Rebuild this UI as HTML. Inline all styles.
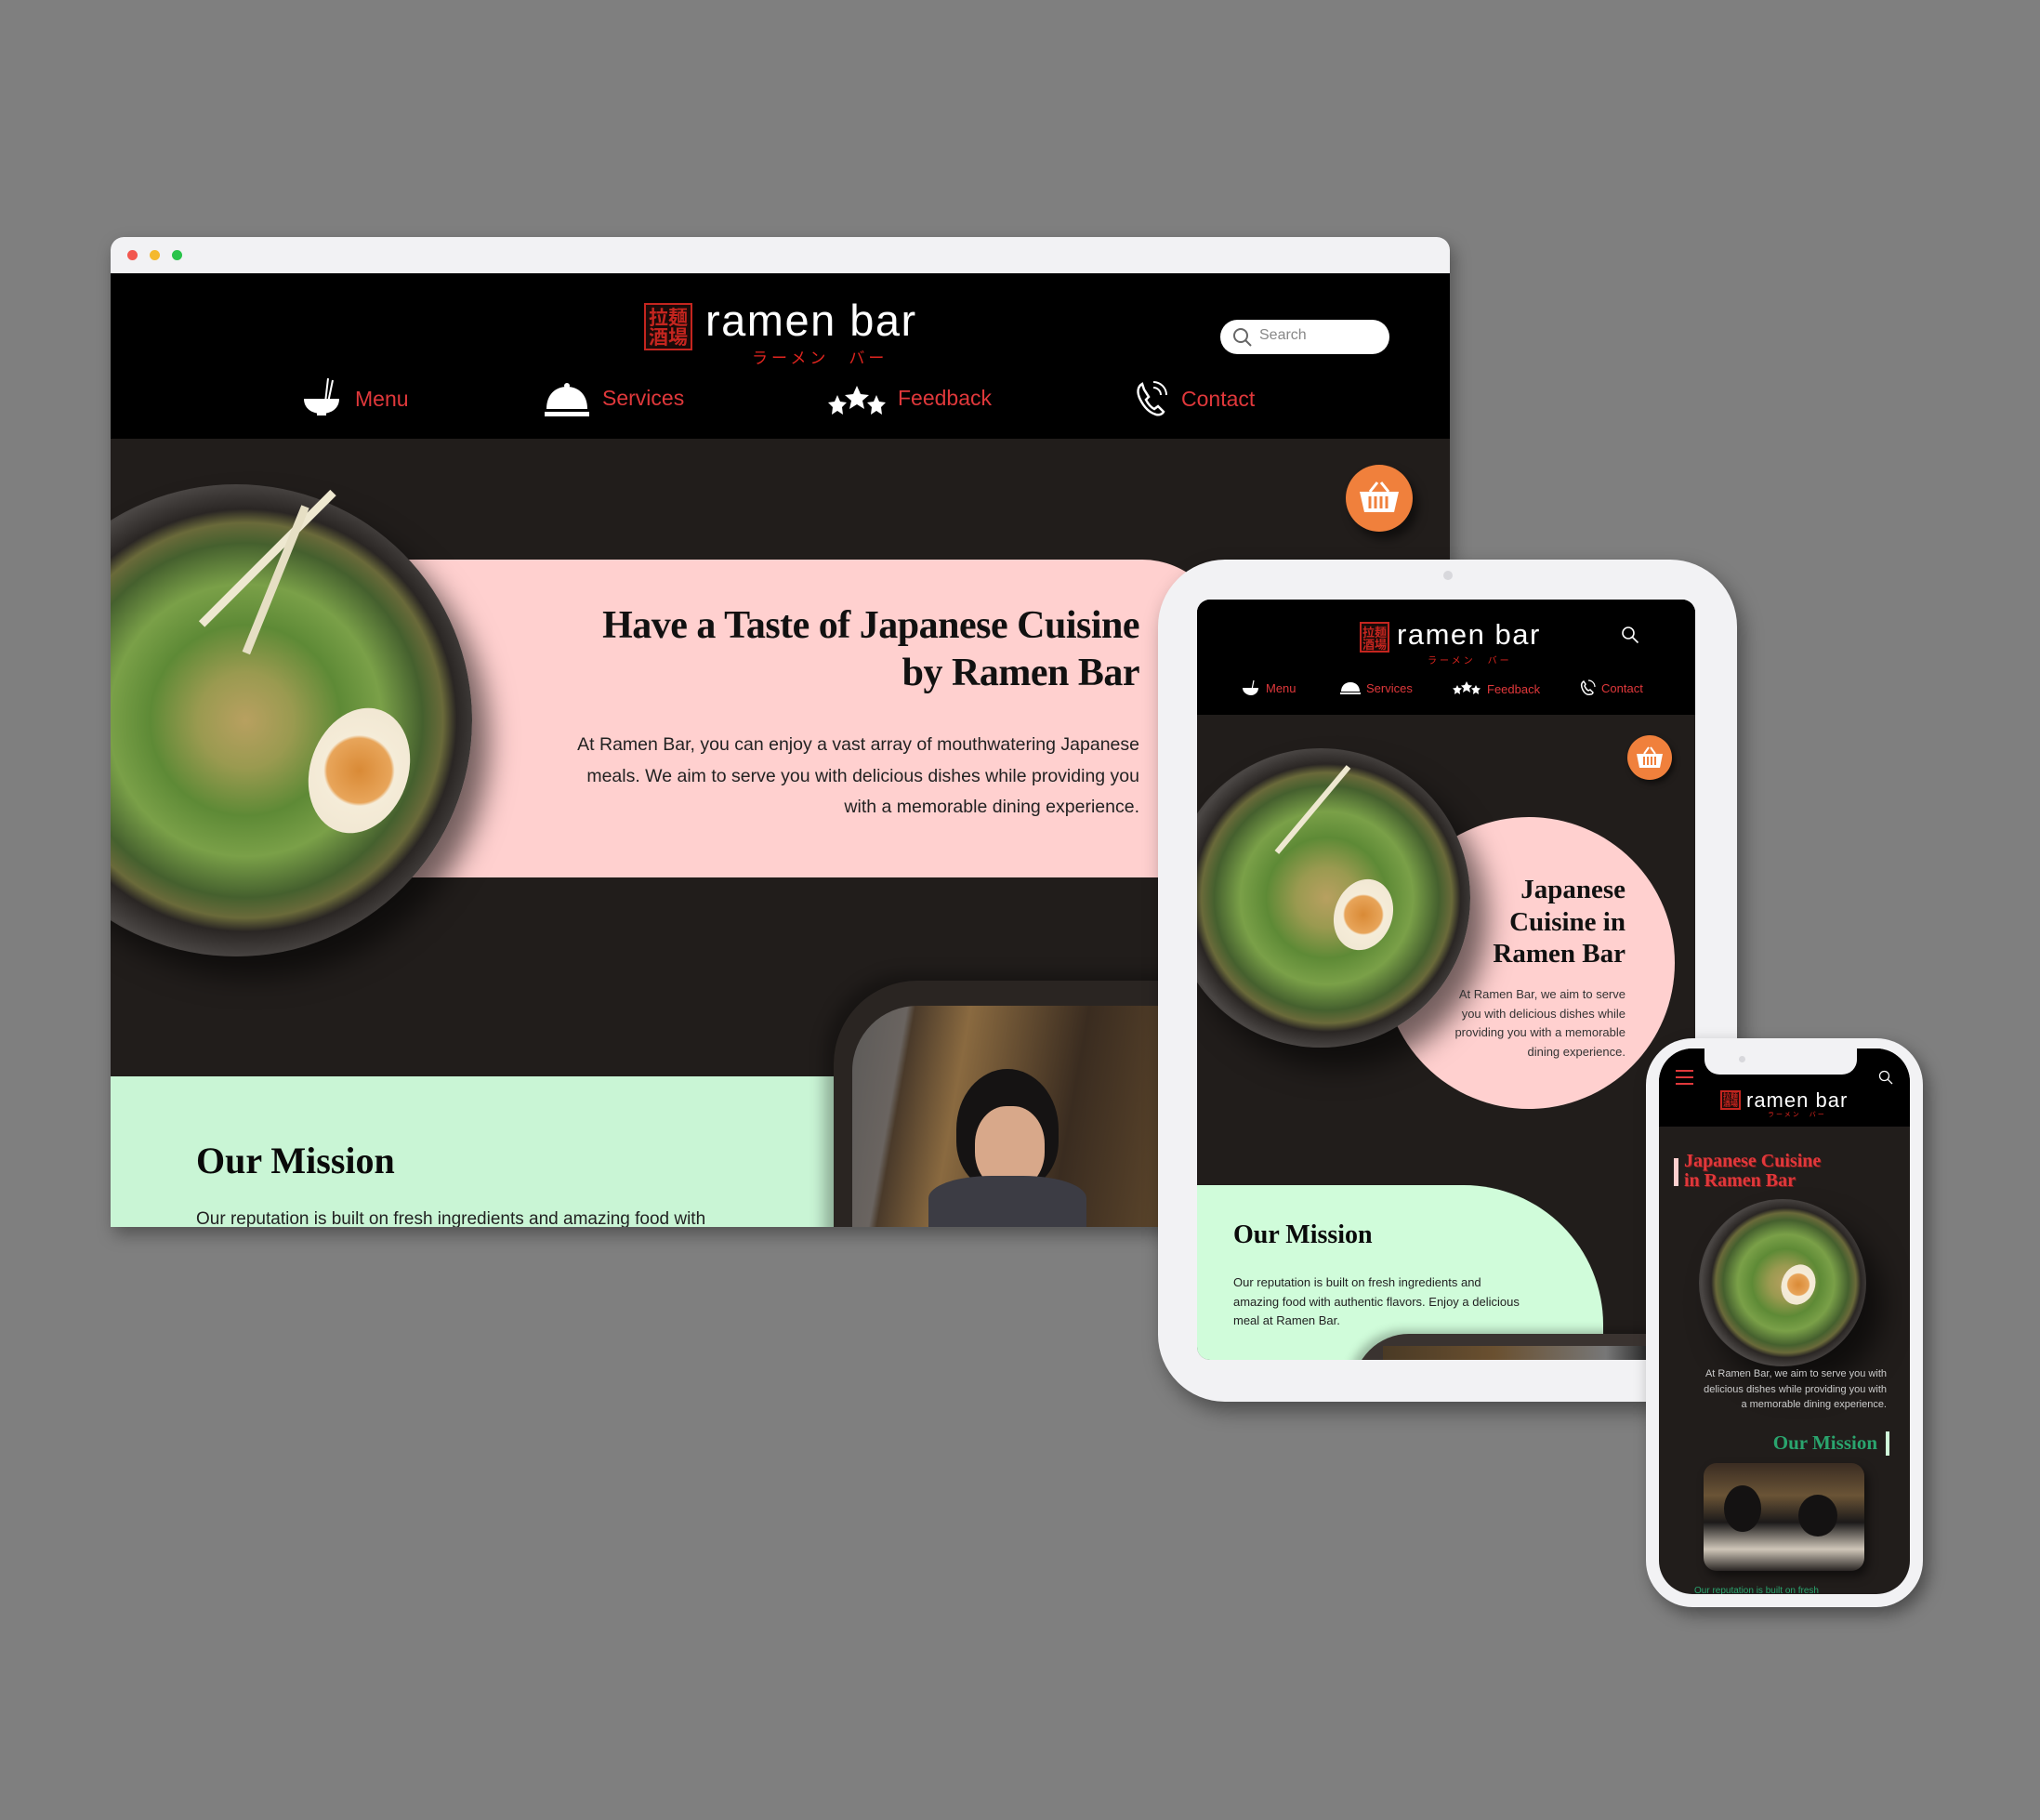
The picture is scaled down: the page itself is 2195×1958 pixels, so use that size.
<!DOCTYPE html>
<html><head><meta charset="utf-8"><style>
*{margin:0;padding:0;box-sizing:border-box}
body{width:2195px;height:1958px;background:#7f7f7f;position:relative;overflow:hidden;font-family:"Liberation Sans","Noto Sans CJK JP",sans-serif}
.a{position:absolute}
.serif{font-family:"Liberation Serif","Noto Serif CJK SC",serif;font-weight:bold}
.kan{background:#1a0a08;border:2px solid #c4251f;color:#c4251f;font-family:"Noto Sans CJK JP",sans-serif;font-weight:bold;display:flex;flex-wrap:wrap;align-content:center;justify-content:center;text-align:center;line-height:1}
.bowl{border-radius:50%;background:radial-gradient(circle at 52% 50%,#b8a060 0,#9a9a50 14%,#5e8a36 28%,#7aa048 40%,#45602e 52%,#6a6a3a 58%,#2a2624 62%,#4a4644 70%,#2c2a28 84%,#151312 100%);box-shadow:18px 22px 30px rgba(0,0,0,.55)}
.egg{border-radius:50%;background:radial-gradient(circle at 50% 50%,#d98a36 0,#e8a55a 40%,#f5ecd8 44%,#efe5d0 100%)}
.nav{color:#e0383b}
</style></head><body>

<!-- DESKTOP WINDOW -->
<div class="a" style="left:119px;top:255px;width:1441px;height:1065px;border-radius:14px 14px 0 0;overflow:hidden;background:#211d1b;box-shadow:4px 8px 18px rgba(0,0,0,.35)">
  <div class="a" style="left:0;top:0;width:1441px;height:39px;background:#f2f2f4"></div>
  <div class="a" style="left:18px;top:14px;width:11px;height:11px;border-radius:50%;background:#f2574f"></div>
  <div class="a" style="left:42px;top:14px;width:11px;height:11px;border-radius:50%;background:#f5b92e"></div>
  <div class="a" style="left:66px;top:14px;width:11px;height:11px;border-radius:50%;background:#29c34a"></div>
  <div class="a" style="left:0;top:39px;width:1441px;height:178px;background:#000"></div>
  <div class="a kan" style="left:574px;top:71px;width:52px;height:51px;font-size:21px">拉麺<br>酒場</div>
  <div class="a" style="left:640px;top:62px;color:#fff;font-size:47px;font-weight:300;letter-spacing:1.5px">ramen bar</div>
  <div class="a" style="left:690px;top:116px;color:#e0251f;font-size:17px;letter-spacing:4px;font-family:'Noto Sans CJK JP',sans-serif">ラーメン　バー</div>
  <div class="a" style="left:1194px;top:89px;width:182px;height:37px;border-radius:19px;background:#fff"></div>
  <svg class="a" style="left:1207px;top:97px" width="22" height="22"><circle cx="9" cy="9" r="7" fill="none" stroke="#666" stroke-width="2"/><path d="M14 14l6 6" stroke="#666" stroke-width="2"/></svg>
  <div class="a" style="left:1236px;top:97px;color:#888;font-size:16px">Search</div>
  <!-- nav -->
  <svg class="a" style="left:206px;top:150px" width="44" height="44"><path d="M28 2l-3 26M33 4l-5 24" stroke="#fff" stroke-width="2"/><path d="M2 24h38c0 10-8 16-19 16S2 34 2 24z" fill="#fff"/><rect x="16" y="38" width="10" height="4" fill="#fff"/></svg>
  <div class="a nav" style="left:263px;top:161px;font-size:23px">Menu</div>
  <svg class="a" style="left:466px;top:155px" width="50" height="40"><path d="M3 30C3 14 13 6 25 6S47 14 47 30z" fill="#fff"/><circle cx="25" cy="5" r="3" fill="#fff"/><rect x="1" y="33" width="48" height="5" fill="#fff"/></svg>
  <div class="a nav" style="left:529px;top:160px;font-size:23px">Services</div>
  <svg class="a" style="left:772px;top:158px" width="62" height="36"><g fill="#fff"><path d="M10 12l3 7 7 1-5 5 1 8-6-4-6 4 1-8-5-5 7-1z"/><path d="M31 2l4 9 9 1-7 6 2 9-8-5-8 5 2-9-7-6 9-1z"/><path d="M52 12l3 7 7 1-5 5 1 8-6-4-6 4 1-8-5-5 7-1z"/></g></svg>
  <div class="a nav" style="left:847px;top:160px;font-size:23px">Feedback</div>
  <svg class="a" style="left:1102px;top:152px" width="40" height="42"><path d="M8 6c-5 3-6 9-2 17s10 14 17 16c4 1 7-1 8-3l-6-6-4 3c-4-2-7-6-9-10l3-3-5-8z" fill="none" stroke="#fff" stroke-width="2.5"/><path d="M20 4a14 14 0 0 1 14 14M20 10a8 8 0 0 1 8 8" fill="none" stroke="#fff" stroke-width="2"/></svg>
  <div class="a nav" style="left:1152px;top:161px;font-size:23px">Contact</div>
  <!-- basket -->
  <div class="a" style="left:1329px;top:245px;width:72px;height:72px;border-radius:50%;background:#f0803c;box-shadow:6px 8px 10px rgba(0,0,0,.5)"></div>
  <svg class="a" style="left:1341px;top:260px" width="48" height="40"><path d="M14 14l8-10M34 14l-8-10" stroke="#fff" stroke-width="3"/><path d="M3 14h42l-5 22H8z" fill="#fff"/><g stroke="#f0803c" stroke-width="3"><path d="M14 19v13M20 19v13M26 19v13M32 19v13"/></g></svg>
  <!-- pink band -->
  <div class="a" style="left:300px;top:347px;width:900px;height:342px;background:#ffd0cf;border-radius:0 90px 0 0"></div>
  <div class="a bowl" style="left:-119px;top:266px;width:508px;height:508px"></div>
  <div class="a" style="left:235px;top:275px;width:9px;height:200px;background:#eee8d0;transform:rotate(45deg);transform-origin:top"></div>
  <div class="a" style="left:205px;top:290px;width:9px;height:170px;background:#e6dfc4;transform:rotate(22deg);transform-origin:top"></div>
  <div class="a egg" style="left:215px;top:505px;width:105px;height:138px;transform:rotate(20deg)"></div>
  <div class="a serif" style="right:334px;top:393px;font-size:42px;line-height:51px;text-align:right;color:#111;letter-spacing:-0.5px">Have a Taste of Japanese Cuisine<br>by Ramen Bar</div>
  <div class="a" style="right:334px;top:530px;font-size:19.5px;line-height:33.5px;text-align:right;color:#222">At Ramen Bar, you can enjoy a vast array of mouthwatering Japanese<br>meals. We aim to serve you with delicious dishes while providing you<br>with a memorable dining experience.</div>
  <!-- mint -->
  <div class="a" style="left:0;top:903px;width:830px;height:170px;background:#c9f5d5"></div>
  <div class="a" style="left:778px;top:800px;width:400px;height:300px;border-radius:90px 0 0 0;background:#2a2522;box-shadow:-10px -8px 16px rgba(0,0,0,.3)"></div>
  <div class="a" style="left:798px;top:827px;width:380px;height:260px;border-radius:70px 0 0 0;background:linear-gradient(100deg,#5c5a58 0,#6a6460 14%,#4a3a2a 16%,#8a6a40 30%,#3a2c20 60%,#6a5030 100%)"></div>
  <div class="a" style="left:910px;top:895px;width:110px;height:130px;border-radius:50% 50% 40% 40%;background:#151313"></div>
  <div class="a" style="left:930px;top:935px;width:75px;height:90px;border-radius:45%;background:#d8a88a"></div>
  <div class="a" style="left:880px;top:1010px;width:170px;height:60px;border-radius:40% 40% 0 0;background:#3c3c44"></div>
  <div class="a serif" style="left:92px;top:970px;font-size:40px;color:#0a0a0a">Our Mission</div>
  <div class="a" style="left:92px;top:1046px;font-size:19px;color:#222">Our reputation is built on fresh ingredients and amazing food with</div>
</div>

<!-- TABLET -->
<div class="a" style="left:1246px;top:602px;width:623px;height:906px;border-radius:72px;background:#f2f2f4;box-shadow:6px 10px 22px rgba(0,0,0,.4)"></div>
<div class="a" style="left:1553px;top:614px;width:10px;height:10px;border-radius:50%;background:#d8d8dc"></div>
<div class="a" style="left:1288px;top:645px;width:536px;height:818px;border-radius:14px;overflow:hidden;background:#211d1b">
  <div class="a" style="left:0;top:0;width:536px;height:124px;background:#000"></div>
  <div class="a kan" style="left:175px;top:24px;width:32px;height:33px;font-size:13px">拉麺<br>酒場</div>
  <div class="a" style="left:215px;top:20px;color:#fff;font-size:31px;font-weight:300;letter-spacing:1.5px">ramen bar</div>
  <div class="a" style="left:248px;top:57px;color:#e0251f;font-size:10px;letter-spacing:3px;font-family:'Noto Sans CJK JP',sans-serif">ラーメン　バー</div>
  <svg class="a" style="left:456px;top:28px" width="20" height="20"><circle cx="8" cy="8" r="6" fill="none" stroke="#fff" stroke-width="1.6"/><path d="M12.5 12.5l6 6" stroke="#fff" stroke-width="1.6"/></svg>
  <svg class="a" style="left:48px;top:86px" width="20" height="18"><path d="M13 1l-2 10" stroke="#fff" stroke-width="1.2"/><path d="M1 9h17c0 5-4 8-8 8S1 14 1 9z" fill="#fff"/></svg>
  <div class="a nav" style="left:74px;top:88px;font-size:13px">Menu</div>
  <svg class="a" style="left:154px;top:87px" width="22" height="16"><path d="M1 12C1 6 5 2 11 2s10 4 10 10z" fill="#fff"/><rect y="13" width="22" height="2" fill="#fff"/></svg>
  <div class="a nav" style="left:182px;top:88px;font-size:13px">Services</div>
  <svg class="a" style="left:275px;top:87px" width="30" height="16"><g fill="#fff"><path d="M5 5l1.5 3 3.5.5-2.5 2.5.5 4-3-2-3 2 .5-4L0 8.5 3.5 8z"/><path d="M15 1l2 4 4 .5-3 3 1 4.5-4-2.5-4 2.5 1-4.5-3-3 4-.5z"/><path d="M25 5l1.5 3 3.5.5-2.5 2.5.5 4-3-2-3 2 .5-4-2.5-2.5L23.5 8z"/></g></svg>
  <div class="a nav" style="left:312px;top:89px;font-size:13px">Feedback</div>
  <svg class="a" style="left:412px;top:85px" width="18" height="18"><path d="M4 3c-3 2-3 5-1 9s5 6 8 5c2 0 3-1 3-2l-3-3-2 1c-2-1-3-3-4-5l1-2-2-3z" fill="none" stroke="#fff" stroke-width="1.5"/><path d="M9 2a7 7 0 0 1 7 7" fill="none" stroke="#fff" stroke-width="1.2"/></svg>
  <div class="a nav" style="left:435px;top:88px;font-size:13px">Contact</div>
  <div class="a" style="left:463px;top:146px;width:48px;height:48px;border-radius:50%;background:#f0803c;box-shadow:3px 4px 6px rgba(0,0,0,.5)"></div>
  <svg class="a" style="left:471px;top:156px" width="32" height="28"><path d="M10 10l5-7M22 10l-5-7" stroke="#fff" stroke-width="2"/><path d="M2 10h28l-3 15H5z" fill="#fff"/><g stroke="#f0803c" stroke-width="2"><path d="M10 13v9M14 13v9M18 13v9M22 13v9"/></g></svg>
  <div class="a" style="left:200px;top:234px;width:314px;height:314px;border-radius:50%;background:#ffd0cf"></div>
  <div class="a bowl" style="left:-28px;top:160px;width:322px;height:322px"></div>
  <div class="a" style="left:160px;top:180px;width:6px;height:120px;background:#eee8d0;transform:rotate(40deg);transform-origin:top"></div>
  <div class="a egg" style="left:148px;top:300px;width:62px;height:78px;transform:rotate(20deg)"></div>
  <div class="a serif" style="right:75px;top:295px;font-size:29px;line-height:34.5px;text-align:right;color:#111">Japanese<br>Cuisine in<br>Ramen Bar</div>
  <div class="a" style="right:75px;top:415px;font-size:13px;line-height:20.5px;text-align:right;color:#333">At Ramen Bar, we aim to serve<br>you with delicious dishes while<br>providing you with a memorable<br>dining experience.</div>
  <div class="a" style="left:0;top:630px;width:437px;height:220px;background:#d0fcda;border-radius:0 150px 0 0"></div>
  <div class="a" style="left:168px;top:790px;width:330px;height:80px;border-radius:60px 0 0 0;background:#3a3330;box-shadow:-6px -4px 10px rgba(0,0,0,.25)"></div>
  <div class="a" style="left:200px;top:803px;width:300px;height:40px;background:linear-gradient(90deg,#4a3a25,#6a5030 40%,#777 80%,#111)"></div>
  <div class="a serif" style="left:39px;top:668px;font-size:28px;color:#0a0a0a">Our Mission</div>
  <div class="a" style="left:39px;top:725px;font-size:13px;line-height:20.5px;color:#222">Our reputation is built on fresh ingredients and<br>amazing food with authentic flavors. Enjoy a delicious<br>meal at Ramen Bar.</div>
</div>

<!-- PHONE -->
<div class="a" style="left:1771px;top:1117px;width:298px;height:612px;border-radius:50px;background:#f2f2f4;box-shadow:6px 8px 18px rgba(0,0,0,.4)"></div>
<div class="a" style="left:1785px;top:1128px;width:270px;height:587px;border-radius:36px;overflow:hidden;background:#211d1b">
  <div class="a" style="left:0;top:0;width:270px;height:84px;background:#000"></div>
  <div class="a" style="left:49px;top:0;width:164px;height:28px;background:#f2f2f4;border-radius:0 0 16px 16px"></div>
  <div class="a" style="left:86px;top:8px;width:7px;height:7px;border-radius:50%;background:#d8d8dc"></div>
  <div class="a" style="left:18px;top:23px;width:19px;height:2px;background:#e0383b;box-shadow:0 7px 0 #e0383b,0 14px 0 #e0383b"></div>
  <svg class="a" style="left:236px;top:23px" width="16" height="16"><circle cx="6.5" cy="6.5" r="5" fill="none" stroke="#fff" stroke-width="1.3"/><path d="M10 10l5 5" stroke="#fff" stroke-width="1.3"/></svg>
  <div class="a kan" style="left:66px;top:45px;width:22px;height:21px;font-size:8px">拉麺<br>酒場</div>
  <div class="a" style="left:94px;top:43px;color:#fff;font-size:22px;font-weight:300;letter-spacing:1px">ramen bar</div>
  <div class="a" style="left:117px;top:66px;color:#e0251f;font-size:7px;letter-spacing:2px;font-family:'Noto Sans CJK JP',sans-serif">ラーメン　バー</div>
  <div class="a" style="left:16px;top:118px;width:5px;height:30px;background:#ffd0cf"></div>
  <div class="a serif" style="left:27px;top:111px;font-size:20px;line-height:21px;color:#e0383b;text-shadow:1px 1px 0 #7a1c1c">Japanese Cuisine<br>in Ramen Bar</div>
  <div class="a bowl" style="left:43px;top:162px;width:180px;height:180px"></div>
  <div class="a egg" style="left:132px;top:232px;width:36px;height:44px;transform:rotate(20deg)"></div>
  <div class="a" style="right:25px;top:342px;font-size:11px;line-height:16.5px;text-align:right;color:#ccc">At Ramen Bar, we aim to serve you with<br>delicious dishes while providing you with<br>a memorable dining experience.</div>
  <div class="a serif" style="right:35px;top:412px;font-size:21px;color:#2aa56e">Our Mission</div>
  <div class="a" style="left:244px;top:412px;width:4px;height:26px;background:#d0fcda"></div>
  <div class="a" style="left:48px;top:446px;width:173px;height:116px;border-radius:14px;background:linear-gradient(180deg,#3a2c22 0,#6a5436 30%,#1c1a1a 55%,#cfc6b8 80%,#2a2624 100%);box-shadow:4px 6px 10px rgba(0,0,0,.5)"></div>
  <div class="a" style="left:70px;top:470px;width:40px;height:50px;border-radius:50%;background:#141212"></div>
  <div class="a" style="left:150px;top:480px;width:42px;height:45px;border-radius:50%;background:#141212"></div>
  <div class="a" style="left:38px;top:578px;font-size:10px;color:#2aa56e">Our reputation is built on fresh</div>
</div>
</body></html>
